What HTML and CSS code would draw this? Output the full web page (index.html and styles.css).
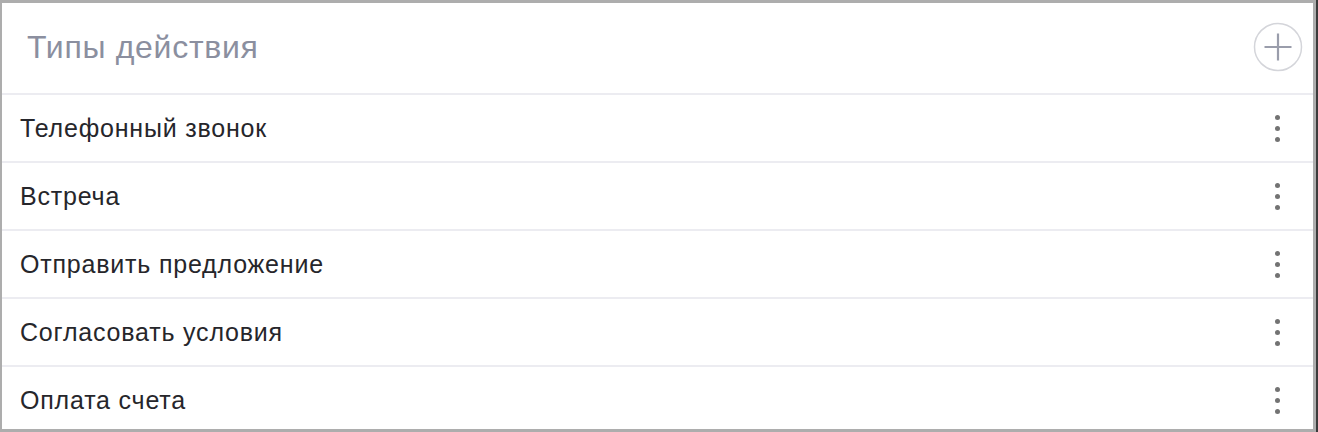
FILE: index.html
```html
<!DOCTYPE html>
<html lang="ru">
<head>
  <meta charset="UTF-8" />
  <meta name="viewport" content="width=device-width, initial-scale=1.0"/>
  <title>Типы действия</title>
  <link rel="stylesheet" href="styles.css">
</head>
<body>
  <div class="panel">
    <div class="panel-head">
      <h1>Типы действия</h1>
      <button class="add-btn" aria-label="Добавить">
        <svg width="50" height="50" viewBox="0 0 50 50">
          <circle cx="25" cy="25" r="23.5" fill="none" stroke="#d4d5da" stroke-width="1.5"/>
          <path d="M25 11.5v27M11.5 25h27" stroke="#9a9dab" stroke-width="2.2"/>
        </svg>
      </button>
    </div>
    <ul class="list">
      <li class="row"><span>Телефонный звонок</span><span class="more"><i></i><i></i><i></i></span></li>
      <li class="row"><span>Встреча</span><span class="more"><i></i><i></i><i></i></span></li>
      <li class="row"><span>Отправить предложение</span><span class="more"><i></i><i></i><i></i></span></li>
      <li class="row"><span>Согласовать условия</span><span class="more"><i></i><i></i><i></i></span></li>
      <li class="row"><span>Оплата счета</span><span class="more"><i></i><i></i><i></i></span></li>
    </ul>
  </div>
</body>
</html>
```

FILE: styles.css
```css
* { box-sizing: border-box; margin: 0; padding: 0; }

html { background: #adadad; }

body {
  font-family: 'Liberation Sans', Arial, sans-serif;
  padding: 3px 3px 3px 2px;
  border-right: 2px solid #3b3b3b;
  height: 432px;
  overflow: hidden;
}

.panel {
  background: #fff;
  height: 426px;
  overflow: hidden;
}

.panel-head {
  height: 92px;
  display: flex;
  align-items: center;
  justify-content: space-between;
  padding: 0 10px 2px 25px;
  border-bottom: 2px solid #ececf1;
}

h1 {
  font-size: 32px;
  font-weight: normal;
  color: #8b8f9f;
  letter-spacing: 0.7px;
}

.add-btn {
  background: none;
  border: none;
  display: flex;
  cursor: pointer;
}

.list { list-style: none; }

.row {
  height: 68px;
  display: flex;
  align-items: center;
  justify-content: space-between;
  padding: 0 33px 0 18px;
  border-bottom: 2px solid #ececf1;
  font-size: 25px;
  letter-spacing: 0.8px;
  color: #26262b;
}

.more {
  display: flex;
  flex-direction: column;
  gap: 6px;
}

.more i {
  width: 5px;
  height: 5px;
  border-radius: 50%;
  background: #737373;
}
```
